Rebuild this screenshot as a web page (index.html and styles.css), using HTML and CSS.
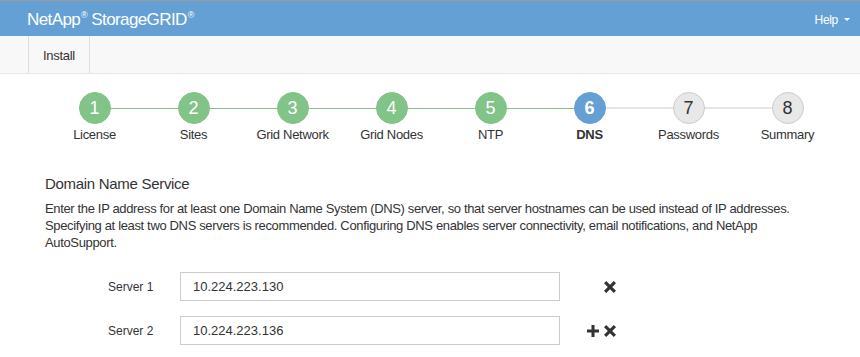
FILE: index.html
```html
<!DOCTYPE html>
<html lang="en">
<head>
  <meta charset="UTF-8" />
  <title>StorageGRID Install</title>
  <link rel="stylesheet" href="styles.css">
</head>
<body>

<div class="topbar">
  <div class="brand">NetApp<sup>®</sup> StorageGRID<sup>®</sup></div>
  <div class="help">Help <span class="caret"></span></div>
</div>

<div class="navbar">
  <div class="tab">Install</div>
</div>

<div class="content">
  <ol class="steps">
    <li class="step done"><span class="num">1</span><span class="label">License</span></li>
    <li class="step done"><span class="num">2</span><span class="label">Sites</span></li>
    <li class="step done"><span class="num">3</span><span class="label">Grid Network</span></li>
    <li class="step done"><span class="num">4</span><span class="label">Grid Nodes</span></li>
    <li class="step done"><span class="num">5</span><span class="label">NTP</span></li>
    <li class="step active"><span class="num">6</span><span class="label">DNS</span></li>
    <li class="step"><span class="num">7</span><span class="label">Passwords</span></li>
    <li class="step"><span class="num">8</span><span class="label">Summary</span></li>
  </ol>

  <h4 class="section-title">Domain Name Service</h4>
  <p class="intro">Enter the IP address for at least one Domain Name System (DNS) server, so that server hostnames can be used instead of IP addresses. Specifying at least two DNS servers is recommended. Configuring DNS enables server connectivity, email notifications, and NetApp AutoSupport.</p>

  <div class="server-row">
    <label class="server-label">Server 1</label>
    <input class="server-input" type="text" value="10.224.223.130" />
    <div class="actions">
      <svg class="icon hidden" viewBox="0 0 12 12"><path d="M4.5 0h3v4.5H12v3H7.5V12h-3V7.5H0v-3h4.5z"/></svg>
      <svg class="icon" viewBox="0 0 12 12"><path d="M2.2 0L6 3.8 9.8 0 12 2.2 8.2 6 12 9.8 9.8 12 6 8.2 2.2 12 0 9.8 3.8 6 0 2.2z"/></svg>
    </div>
  </div>

  <div class="server-row">
    <label class="server-label">Server 2</label>
    <input class="server-input" type="text" value="10.224.223.136" />
    <div class="actions">
      <svg class="icon" viewBox="0 0 12 12"><path d="M4.5 0h3v4.5H12v3H7.5V12h-3V7.5H0v-3h4.5z"/></svg>
      <svg class="icon" viewBox="0 0 12 12"><path d="M2.2 0L6 3.8 9.8 0 12 2.2 8.2 6 12 9.8 9.8 12 6 8.2 2.2 12 0 9.8 3.8 6 0 2.2z"/></svg>
    </div>
  </div>
</div>

</body>
</html>
```

FILE: styles.css
```css
body {
  margin: 0;
  font-family: 'Liberation Sans', Arial, sans-serif;
  font-size: 13px;
  color: #333;
  background: #fff;
}

.topbar {
  border-top: 1px solid #9b9b9b;
  background: #65a0d4;
  height: 35px;
  display: flex;
  align-items: center;
  justify-content: space-between;
  color: #fff;
}

.brand {
  padding-left: 27px;
  font-size: 17px;
  letter-spacing: -0.6px;
  margin-top: 3px;
}

.brand sup {
  font-size: 9px;
  vertical-align: 7px;
  margin-left: 1px;
}

.help {
  padding-right: 10px;
  font-size: 12px;
  letter-spacing: -0.3px;
  display: flex;
  align-items: center;
  margin-top: 2px;
}

.caret {
  display: inline-block;
  margin-left: 6px;
  border-left: 3px solid transparent;
  border-right: 3px solid transparent;
  border-top: 3px solid #fff;
}

.navbar {
  background: #f8f8f8;
  border-bottom: 1px solid #e7e7e7;
  height: 37px;
  display: flex;
}

.tab {
  margin-left: 28px;
  padding: 2px 14px 0;
  border-left: 1px solid #ddd;
  border-right: 1px solid #ddd;
  display: flex;
  align-items: center;
  color: #333;
  letter-spacing: -0.3px;
}

.content {
  padding: 18px 0 0 45px;
}

.steps {
  list-style: none;
  margin: 0;
  padding: 0;
  display: grid;
  grid-template-columns: repeat(8, 99px);
}

.step {
  position: relative;
  display: flex;
  flex-direction: column;
  align-items: center;
}

/* connector to the previous step */
.step + .step::before {
  content: '';
  position: absolute;
  top: 16px;
  left: -50%;
  width: 100%;
  height: 1px;
  background: #82c388;
}

.step:not(.done):not(.active)::before {
  background: #e6e6e6;
  height: 2px;
  top: 15px;
}

.num {
  position: relative;
  z-index: 1;
  width: 30px;
  height: 30px;
  border-radius: 50%;
  border: 1px solid #ccc;
  background: #e8e8e8;
  color: #333;
  font-size: 18px;
  display: flex;
  align-items: center;
  justify-content: center;
}

.done .num {
  background: #82c388;
  border-color: #82c388;
  color: #fff;
}

.active .num {
  background: #65a0d4;
  border-color: #65a0d4;
  color: #fff;
  font-weight: bold;
}

.label {
  margin-top: 3px;
  font-size: 13px;
  line-height: 16px;
  letter-spacing: -0.3px;
}

.active .label {
  font-weight: bold;
}

.section-title {
  margin: 31px 0 0;
  font-size: 15px;
  font-weight: normal;
  line-height: 20px;
  letter-spacing: -0.3px;
}

.intro {
  margin: 6px 0 0;
  width: 770px;
  line-height: 17px;
  letter-spacing: -0.35px;
}

.server-row {
  display: flex;
  align-items: center;
  margin-top: 21px;
}

.server-row + .server-row {
  margin-top: 15px;
}

.server-label {
  width: 135px;
  padding-left: 63px;
  box-sizing: border-box;
  font-size: 12px;
}

.server-input {
  width: 380px;
  height: 29px;
  box-sizing: border-box;
  border: 1px solid #ccc;
  padding: 0 12px;
  font-family: 'Liberation Sans', Arial, sans-serif;
  font-size: 13px;
  color: #333;
}

.actions {
  display: flex;
  gap: 5px;
  margin-left: 27px;
}

.icon {
  width: 12px;
  height: 12px;
  fill: #333;
}

.icon.hidden {
  visibility: hidden;
}
```
